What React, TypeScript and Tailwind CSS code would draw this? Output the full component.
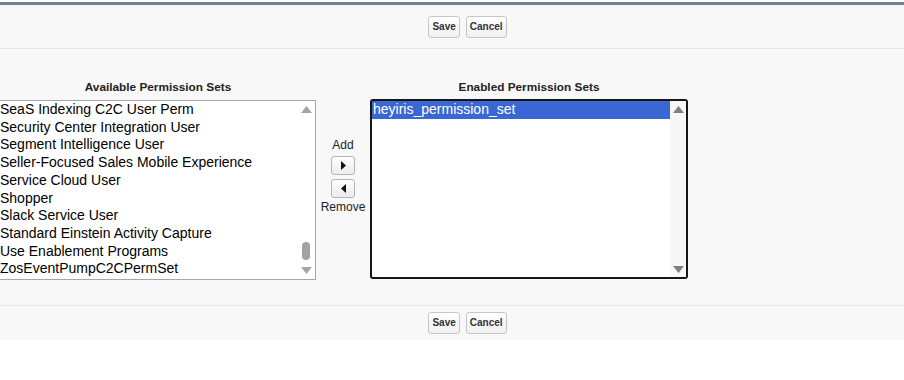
import React from 'react';

const available = [
  'SeaS Indexing C2C User Perm',
  'Security Center Integration User',
  'Segment Intelligence User',
  'Seller-Focused Sales Mobile Experience',
  'Service Cloud User',
  'Shopper',
  'Slack Service User',
  'Standard Einstein Activity Capture',
  'Use Enablement Programs',
  'ZosEventPumpC2CPermSet',
];

const Arrow = ({ dir, color }: { dir: 'up' | 'down'; color: string }) => (
  <svg width="11" height="7" viewBox="0 0 11 7">
    <polygon points={dir === 'up' ? '5.5,0 11,7 0,7' : '0,0 11,0 5.5,7'} fill={color} />
  </svg>
);

const ButtonBar = () => (
  <div className="flex items-center justify-center gap-[6px] pl-[31px]">
    {['Save', 'Cancel'].map((b) => (
      <button
        key={b}
        className="h-[22px] px-[3px] rounded-[3px] border border-[#c6c6c6] bg-gradient-to-b from-white to-[#f0f0f0] text-[10px] font-bold text-[#333] leading-none"
      >
        {b}
      </button>
    ))}
  </div>
);

const MoveButton = ({ dir }: { dir: 'left' | 'right' }) => (
  <button className="w-[24px] h-[19px] rounded-[3px] border border-[#b4b4b4] bg-gradient-to-b from-white to-[#ececec] flex items-center justify-center">
    <svg width="5" height="9" viewBox="0 0 5 9">
      <polygon points={dir === 'right' ? '0,0 5,4.5 0,9' : '5,0 0,4.5 5,9'} fill="#111" />
    </svg>
  </button>
);

export default function App() {
  return (
    <div className="w-[904px] h-[380px] bg-white font-['Liberation_Sans',Arial,sans-serif] text-black">
      <div className="h-[2px] bg-white" />
      <div className="h-[3px] bg-[#767e97]" />
      <div className="h-[44px] bg-[#f8f8f8] border-b border-[#e6e6e6] flex items-center justify-center">
        <ButtonBar />
      </div>

      <div className="h-[256px] bg-[#f8f8f8] flex pt-[32px]">
        {/* available */}
        <div className="w-[316px] flex flex-col">
          <div className="text-center text-[11.8px] font-bold text-[#222] leading-[13px] mb-[6px]">
            Available Permission Sets
          </div>
          <div className="-ml-px w-[317px] h-[180px] bg-white border border-[#a6a6a6] flex">
            <div className="flex-1 text-[14px] leading-[17.7px] whitespace-nowrap overflow-hidden">
              {available.map((a) => (
                <div key={a}>{a}</div>
              ))}
            </div>
            <div className="w-[18px] flex flex-col items-center pt-[5px] pb-[5px]">
              <Arrow dir="up" color="#a4a4a4" />
              <div className="flex-1" />
              <div className="w-[8px] h-[18px] rounded-full bg-[#a3a3a3] mb-[7px]" />
              <Arrow dir="down" color="#a4a4a4" />
            </div>
          </div>
        </div>

        {/* move buttons */}
        <div className="w-[54px] flex flex-col items-center pt-[58px] text-[12px] text-[#222]">
          <div className="leading-[13px]">Add</div>
          <div className="mt-[4px] flex flex-col gap-[4px]">
            <MoveButton dir="right" />
            <MoveButton dir="left" />
          </div>
          <div className="leading-[14px] mt-[2px]">Remove</div>
        </div>

        {/* enabled */}
        <div className="w-[318px] flex flex-col">
          <div className="text-center text-[11.8px] font-bold text-[#222] leading-[13px] mb-[5px]">
            Enabled Permission Sets
          </div>
          <div className="w-[318px] h-[180px] bg-white border-2 border-[#161616] rounded-[3px] flex">
            <div className="flex-1 text-[14px] leading-[17.7px] whitespace-nowrap overflow-hidden">
              <div className="bg-[#3a67d3] text-white pl-px">heyiris_permission_set</div>
            </div>
            <div className="w-[16px] bg-[#f7f7f7] flex flex-col items-center justify-between pt-[5px] pb-[4px]">
              <Arrow dir="up" color="#7f7f7f" />
              <Arrow dir="down" color="#7f7f7f" />
            </div>
          </div>
        </div>
      </div>

      <div className="h-[35px] bg-[#f8f8f8] border-t border-[#e8e8e8] flex items-center justify-center">
        <ButtonBar />
      </div>
    </div>
  );
}
